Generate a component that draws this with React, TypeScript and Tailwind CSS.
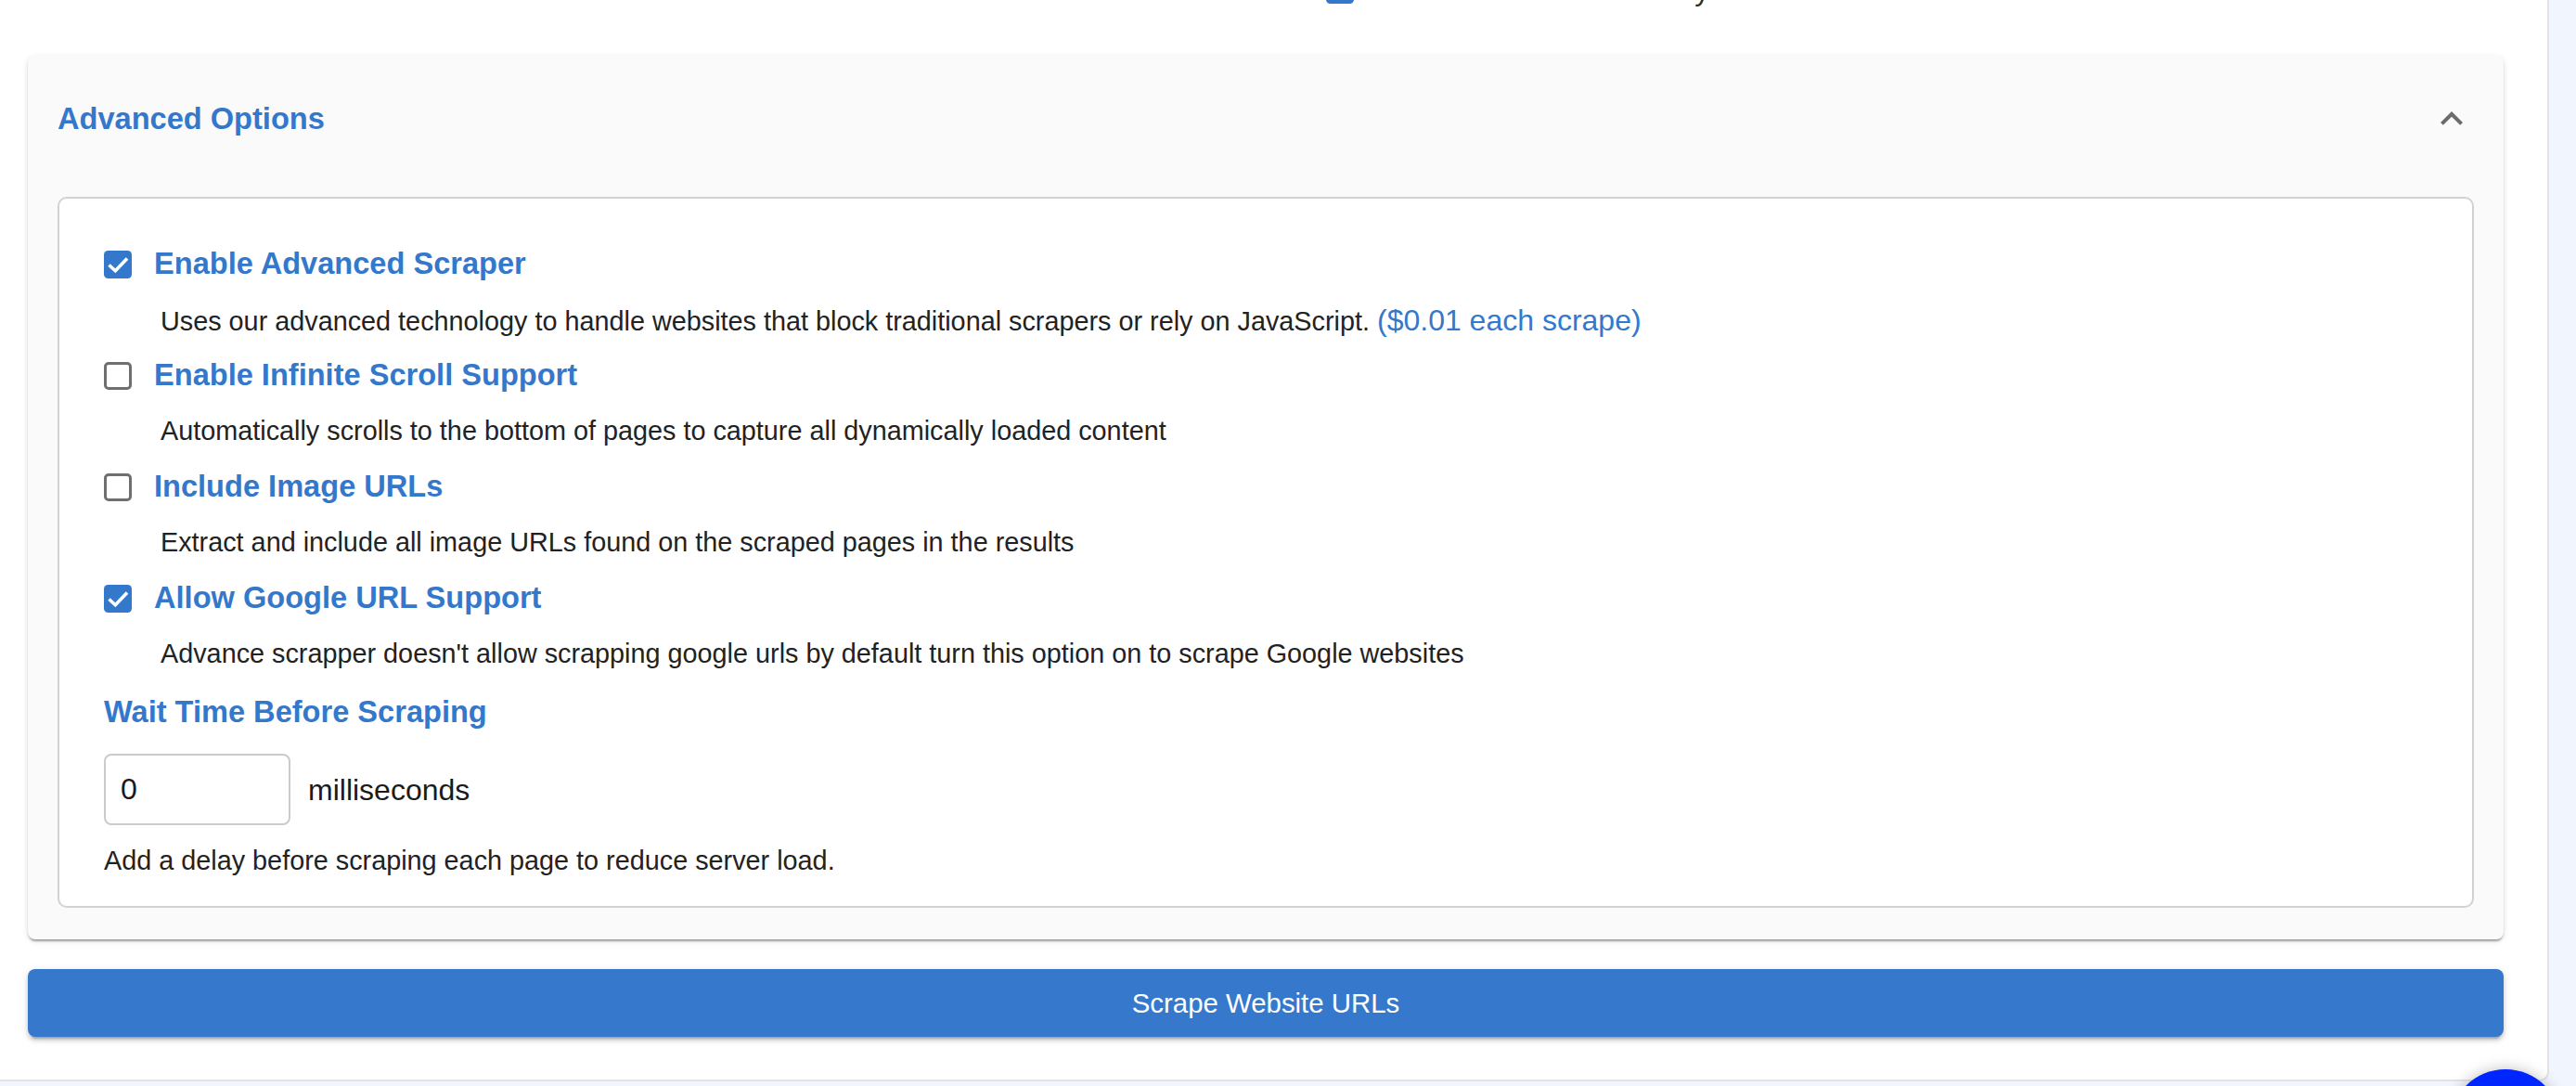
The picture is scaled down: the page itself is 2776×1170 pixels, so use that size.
import React from "react";

const BLUE = "#3478cc";

function CheckBox({ checked }: { checked: boolean }) {
  if (checked) {
    return (
      <svg width="30" height="30" viewBox="0 0 30 30" className="shrink-0">
        <rect x="0" y="0" width="30" height="30" rx="4.5" fill={BLUE} />
        <polyline
          points="5.5,15.5 12.3,21.8 25,8.5"
          fill="none"
          stroke="#ffffff"
          strokeWidth="3.6"
          strokeLinecap="butt"
          strokeLinejoin="miter"
        />
      </svg>
    );
  }
  return (
    <div className="w-[30px] h-[30px] shrink-0 rounded-[5px] border-[3px] border-[#6f6f6f] bg-white box-border" />
  );
}

function Option({
  label,
  checked,
  children,
}: {
  label: string;
  checked: boolean;
  children: React.ReactNode;
}) {
  return (
    <div className="flex flex-col">
      <div className="h-[59px] flex items-center gap-[24px]">
        <CheckBox checked={checked} />
        <span className="text-[32.6px] font-bold text-[#3478cc] leading-none">{label}</span>
      </div>
      <div className="h-[61px] flex items-center pl-[61px] text-[28.8px] text-[#222222] leading-none whitespace-nowrap">
        {children}
      </div>
    </div>
  );
}

export default function App() {
  return (
    <div
      className="relative w-full h-[1170px] overflow-hidden bg-[#f1f5fd]"
      style={{ fontFamily: '"Liberation Sans", Arial, Helvetica, sans-serif' }}
    >
      <div className="w-[2747px] h-[1165px] bg-white border-r-2 border-b-2 border-[#e2e2e6] rounded-br-[10px] box-border pl-[30px] pr-[47px] flex flex-col">
        {/* previous row, cut off at top */}
        <div className="-mt-[26px] h-[30px] flex items-center pl-[1399px] gap-[24px]">
          <CheckBox checked={true} />
          <span className="text-[32px] text-[#2b2b2b] leading-none whitespace-nowrap">
            Extract main content only
          </span>
        </div>

        {/* Accordion card */}
        <div className="mt-[56px] bg-[#fafafa] rounded-[8px] shadow-[0_4px_2px_-2px_rgba(0,0,0,0.2),0_2px_2px_0_rgba(0,0,0,0.14),0_2px_6px_0_rgba(0,0,0,0.12)] flex flex-col">
          <div className="h-[136px] flex items-center justify-between px-[32px]">
            <span className="text-[32.6px] font-bold text-[#3478cc] leading-none">
              Advanced Options
            </span>
            <svg width="48" height="48" viewBox="0 0 24 24" fill="#6b6b6b">
              <path d="M12 8l-6 6 1.41 1.41L12 10.83l4.59 4.58L18 14z" />
            </svg>
          </div>
          <div className="pt-[16px] px-[32px] pb-[34px]">
            <div className="bg-white border-2 border-[#d2d2d2] rounded-[10px] pt-[41px] pb-[29px] px-[48px] flex flex-col">
              <Option label="Enable Advanced Scraper" checked={true}>
                <span>
                  Uses our advanced technology to handle websites that block traditional scrapers or rely on JavaScript.{" "}
                  <span className="text-[32px] text-[#3478cc]">($0.01 each scrape)</span>
                </span>
              </Option>
              <Option label="Enable Infinite Scroll Support" checked={false}>
                Automatically scrolls to the bottom of pages to capture all dynamically loaded content
              </Option>
              <Option label="Include Image URLs" checked={false}>
                Extract and include all image URLs found on the scraped pages in the results
              </Option>
              <Option label="Allow Google URL Support" checked={true}>
                Advance scrapper doesn't allow scrapping google urls by default turn this option on to scrape Google websites
              </Option>

              <div className="h-[64px] flex items-center">
                <span className="text-[32.6px] font-bold text-[#3478cc] leading-none">
                  Wait Time Before Scraping
                </span>
              </div>
              <div className="mt-[13px] h-[77px] flex items-center gap-[19px]">
                <input
                  readOnly
                  value="0"
                  className="w-[201px] h-[77px] box-border border-2 border-[#cbcbcb] rounded-[8px] pl-[16px] text-[32px] text-[#1a1a1a] bg-white outline-none"
                  style={{ fontFamily: '"Liberation Sans", Arial, Helvetica, sans-serif' }}
                />
                <span className="text-[32px] text-[#1a1a1a] leading-none">milliseconds</span>
              </div>
              <div className="mt-[18px] h-[40px] flex items-center text-[28.8px] text-[#222222] leading-none">
                Add a delay before scraping each page to reduce server load.
              </div>
            </div>
          </div>
        </div>

        {/* Submit button */}
        <button className="mt-[32px] h-[73px] w-full rounded-[8px] bg-[#3578cc] text-white text-[29.4px] leading-none shadow-[0_6px_2px_-4px_rgba(0,0,0,0.2),0_4px_4px_0_rgba(0,0,0,0.14),0_2px_10px_0_rgba(0,0,0,0.12)]">
          Scrape Website URLs
        </button>
      </div>

      {/* floating chat button */}
      <div className="absolute left-[2640px] top-[1152px] w-[120px] h-[120px] rounded-full bg-[#0026ff] shadow-[0_0_16px_rgba(0,0,0,0.25)]" />
    </div>
  );
}
